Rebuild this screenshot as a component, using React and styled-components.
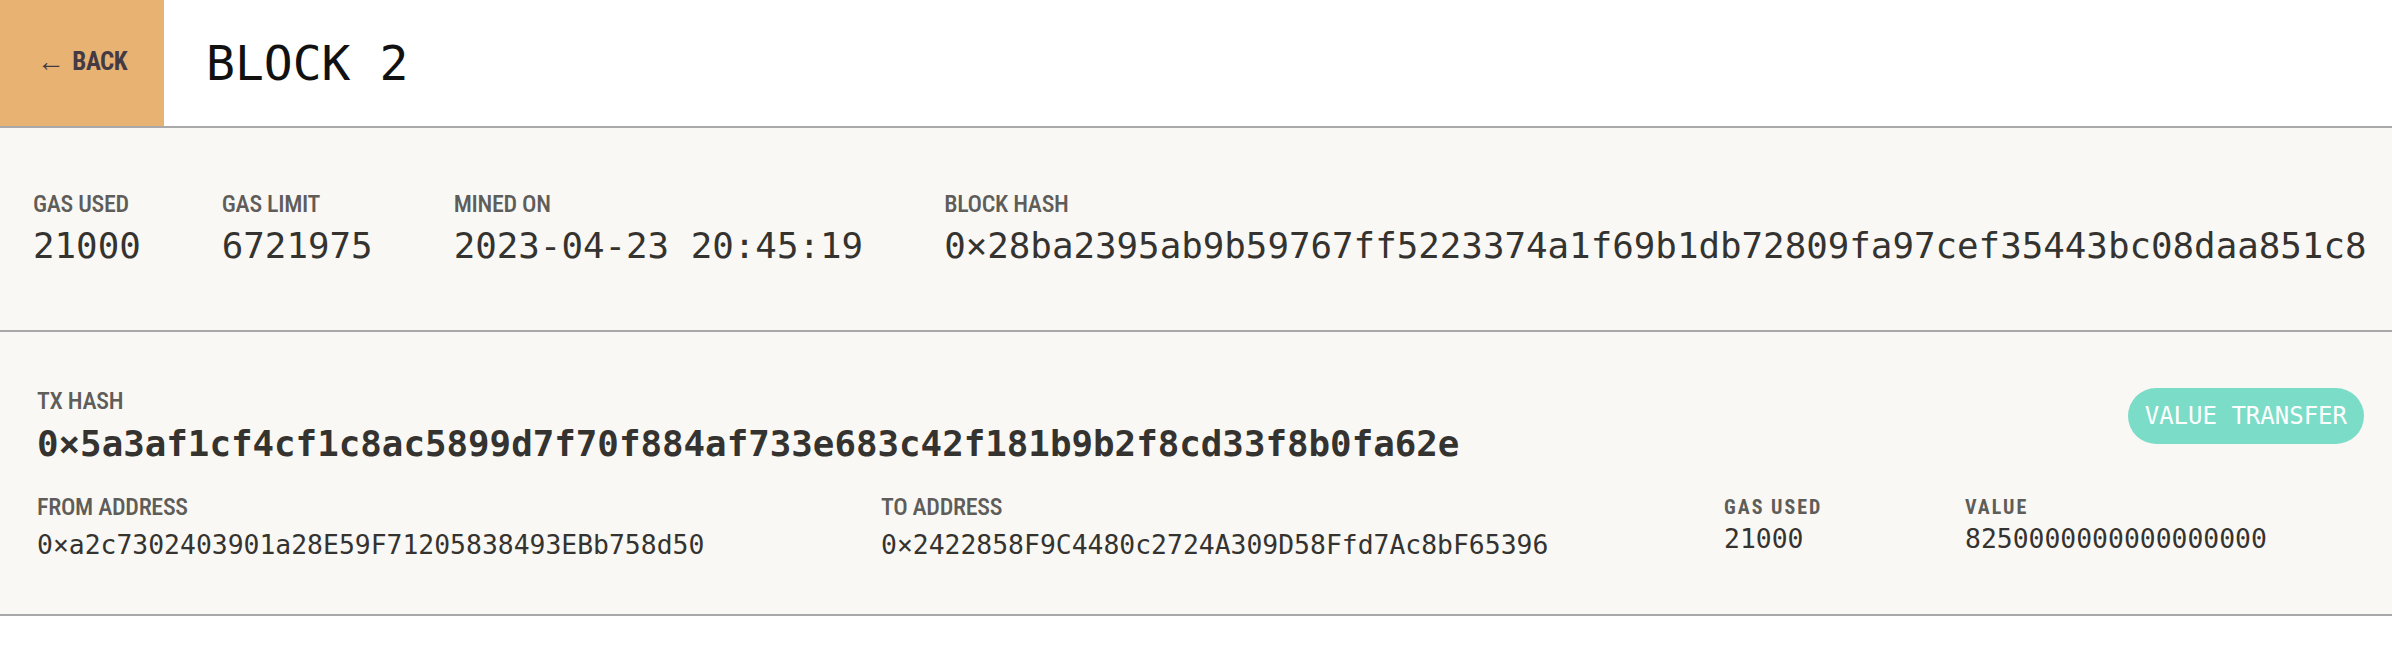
import React from 'react';
import styled, { createGlobalStyle } from 'styled-components';

const GlobalStyle = createGlobalStyle`
  html, body {
    margin: 0;
    padding: 0;
    background: #fff;
  }
  body {
    font-family: Roboto, "Liberation Sans", sans-serif;
  }
`;

const mono = `"DejaVu Sans Mono", "Liberation Mono", monospace`;
const label = `"Roboto Condensed", Roboto, "Liberation Sans", sans-serif`;

const Page = styled.div`
  width: 2392px;
`;

const Header = styled.header`
  display: flex;
  align-items: stretch;
  height: 126px;
  border-bottom: 2px solid #a9a9a9;
  background: #fff;
`;

const BackButton = styled.button`
  display: flex;
  align-items: center;
  justify-content: center;
  width: 164px;
  padding: 0 0 3px;
  border: none;
  background: #e8b273;
  color: #433a44;
  font-family: ${label};
  font-weight: 700;
  font-size: 25px;
  letter-spacing: -0.5px;
  cursor: pointer;
  span {
    font-size: 28px;
    margin-right: 8px;
  }
`;

const Title = styled.h1`
  margin: 0;
  padding-left: 42px;
  align-self: center;
  font-family: ${mono};
  font-weight: 400;
  font-size: 48px;
  line-height: 48px;
  color: #111;
`;

const Section = styled.section`
  background: #f9f8f5;
  border-bottom: 2px solid #a9a9a9;
  padding: ${p => p.$pad};
`;

const InfoRow = styled.div`
  display: flex;
  gap: 81px;
`;

const Cell = styled.div`
  display: flex;
  flex-direction: column;
  gap: ${p => p.$gap || 12}px;
`;

const Label = styled.div`
  font-family: ${label};
  font-weight: ${p => (p.$small ? 700 : 500)};
  font-size: ${p => (p.$small ? 20 : 24)}px;
  line-height: 24px;
  letter-spacing: ${p => (p.$small ? '2px' : '-0.3px')};
  color: #5f5d59;
  text-transform: uppercase;
`;

const Value = styled.div`
  font-family: ${mono};
  font-size: ${p => p.$size || 35.8}px;
  line-height: ${p => Math.round(p.$size || 36)}px;
  font-weight: ${p => (p.$bold ? 700 : 400)};
  color: #35332f;
  white-space: nowrap;
`;

const TxTop = styled.div`
  display: flex;
  justify-content: space-between;
  align-items: flex-start;
`;

const Badge = styled.div`
  display: flex;
  align-items: center;
  height: 56px;
  padding: 0 17px;
  margin-top: -1px;
  border-radius: 28px;
  background: #7bdcc8;
  color: #fff;
  font-family: ${mono};
  font-size: 24px;
  font-weight: 300;
  white-space: pre;
`;

const TxGrid = styled.div`
  display: grid;
  grid-template-columns: 844px 843px 241px 1fr;
  margin-top: 33px;
`;

const blockInfo = [
  { label: 'Gas Used', value: '21000' },
  { label: 'Gas Limit', value: '6721975' },
  { label: 'Mined On', value: '2023-04-23 20:45:19' },
  {
    label: 'Block Hash',
    value: '0×28ba2395ab9b59767ff5223374a1f69b1db72809fa97cef35443bc08daa851c8',
  },
];

const tx = {
  hash: '0×5a3af1cf4cf1c8ac5899d7f70f884af733e683c42f181b9b2f8cd33f8b0fa62e',
  from: '0×a2c7302403901a28E59F71205838493EBb758d50',
  to: '0×2422858F9C4480c2724A309D58Ffd7Ac8bF65396',
  gas: '21000',
  value: '8250000000000000000',
};

export default function App() {
  return (
    <Page>
      <GlobalStyle />
      <Header>
        <BackButton>
          <span>←</span>BACK
        </BackButton>
        <Title>BLOCK 2</Title>
      </Header>

      <Section $pad="64px 20px 66px 33px">
        <InfoRow>
          {blockInfo.map(item => (
            <Cell key={item.label}>
              <Label>{item.label}</Label>
              <Value>{item.value}</Value>
            </Cell>
          ))}
        </InfoRow>
      </Section>

      <Section $pad="57px 28px 56px 37px">
        <TxTop>
          <Cell $gap={13}>
            <Label>TX Hash</Label>
            <Value $bold>{tx.hash}</Value>
          </Cell>
          <Badge>VALUE TRANSFER</Badge>
        </TxTop>
        <TxGrid>
          <Cell $gap={13}>
            <Label>From Address</Label>
            <Value $size={26.4}>{tx.from}</Value>
          </Cell>
          <Cell $gap={13}>
            <Label>To Address</Label>
            <Value $size={26.4}>{tx.to}</Value>
          </Cell>
          <Cell $gap={7}>
            <Label $small>Gas Used</Label>
            <Value $size={26.4}>{tx.gas}</Value>
          </Cell>
          <Cell $gap={7}>
            <Label $small>Value</Label>
            <Value $size={26.4}>{tx.value}</Value>
          </Cell>
        </TxGrid>
      </Section>
    </Page>
  );
}
